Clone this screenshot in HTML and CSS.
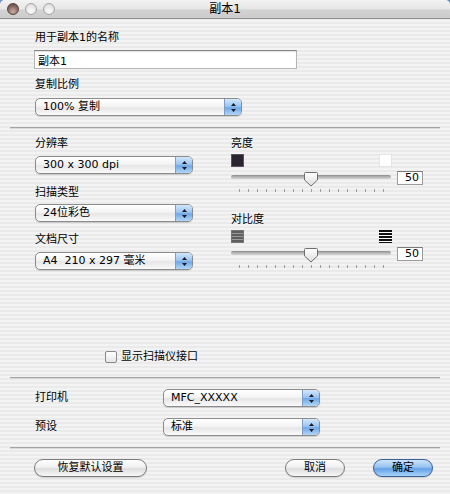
FILE: index.html
```html
<!DOCTYPE html>
<html lang="zh-CN">
<head>
    <meta charset="UTF-8">
    <meta name="viewport" content="width=device-width, initial-scale=1.0">
    <title>副本1</title>
    <link rel="stylesheet" href="styles.css">
</head>
<body>
    <div class="window">
        <div class="titlebar">
            <div class="lights">
                <span class="light light-close"></span>
                <span class="light"></span>
                <span class="light"></span>
            </div>
            <div class="title">副本1</div>
        </div>

        <div class="content">
            <!-- Copy name and ratio -->
            <div class="section name-section">
                <div class="label">用于副本1的名称</div>
                <input class="text-field" type="text" value="副本1">
                <div class="label label-ratio">复制比例</div>
                <div class="popup popup-ratio">
                    <span class="popup-text">100% 复制</span>
                    <span class="popup-arrows"><svg width="5" height="9" viewBox="0 0 5 9"><path d="M2.5 0L5 3H0Z M0 6H5L2.5 9Z" fill="#1c1c28"/></svg></span>
                </div>
            </div>

            <hr class="sep sep-top">

            <!-- Scan settings -->
            <div class="section scan-section">
                <div class="col-left">
                    <div class="label">分辨率</div>
                    <div class="popup popup-col">
                        <span class="popup-text">300 x 300 dpi</span>
                        <span class="popup-arrows"><svg width="5" height="9" viewBox="0 0 5 9"><path d="M2.5 0L5 3H0Z M0 6H5L2.5 9Z" fill="#1c1c28"/></svg></span>
                    </div>
                    <div class="label label-type">扫描类型</div>
                    <div class="popup popup-col popup-type">
                        <span class="popup-text">24位彩色</span>
                        <span class="popup-arrows"><svg width="5" height="9" viewBox="0 0 5 9"><path d="M2.5 0L5 3H0Z M0 6H5L2.5 9Z" fill="#1c1c28"/></svg></span>
                    </div>
                    <div class="label label-size">文档尺寸</div>
                    <div class="popup popup-col">
                        <span class="popup-text">A4&nbsp;&nbsp;210 x 297 毫米</span>
                        <span class="popup-arrows"><svg width="5" height="9" viewBox="0 0 5 9"><path d="M2.5 0L5 3H0Z M0 6H5L2.5 9Z" fill="#1c1c28"/></svg></span>
                    </div>
                </div>

                <div class="col-right">
                    <div class="label">亮度</div>
                    <div class="icon-row">
                        <span class="swatch swatch-dark"></span>
                        <span class="swatch swatch-light"></span>
                    </div>
                    <div class="slider-row">
                        <div class="slider">
                            <div class="track"></div>
                            <svg class="thumb" width="16" height="16" viewBox="0 0 16 16">
                                <defs>
                                    <linearGradient id="thumb-fill" x1="0" y1="0" x2="0" y2="1">
                                        <stop offset="0" stop-color="#ffffff"/>
                                        <stop offset="1" stop-color="#dcdcdc"/>
                                    </linearGradient>
                                </defs>
                                <path d="M2.5 1.5H13.5Q14.5 1.5 14.5 2.5V9L8 15L1.5 9V2.5Q1.5 1.5 2.5 1.5Z" fill="url(#thumb-fill)" stroke="#6e6e6e"/>
                            </svg>
                        </div>
                        <div class="value-box">50</div>
                    </div>
                    <div class="ticks">
                        <i></i><i></i><i></i><i></i><i></i><i></i><i></i><i></i><i></i>
                        <i></i><i></i><i></i><i></i><i></i><i></i><i></i><i></i>
                    </div>

                    <div class="label label-contrast">对比度</div>
                    <div class="icon-row">
                        <span class="swatch stripes-low"></span>
                        <span class="swatch stripes-high"></span>
                    </div>
                    <div class="slider-row">
                        <div class="slider">
                            <div class="track"></div>
                            <svg class="thumb" width="16" height="16" viewBox="0 0 16 16">
                                <path d="M2.5 1.5H13.5Q14.5 1.5 14.5 2.5V9L8 15L1.5 9V2.5Q1.5 1.5 2.5 1.5Z" fill="url(#thumb-fill)" stroke="#6e6e6e"/>
                            </svg>
                        </div>
                        <div class="value-box">50</div>
                    </div>
                    <div class="ticks">
                        <i></i><i></i><i></i><i></i><i></i><i></i><i></i><i></i><i></i>
                        <i></i><i></i><i></i><i></i><i></i><i></i><i></i><i></i>
                    </div>
                </div>
            </div>

            <label class="check-row">
                <span class="checkbox"></span>
                <span>显示扫描仪接口</span>
            </label>

            <hr class="sep sep-mid">

            <!-- Printer and preset -->
            <div class="section printer-section">
                <div class="label">打印机</div>
                <div class="popup popup-printer">
                    <span class="popup-text">MFC_XXXXX</span>
                    <span class="popup-arrows"><svg width="5" height="9" viewBox="0 0 5 9"><path d="M2.5 0L5 3H0Z M0 6H5L2.5 9Z" fill="#1c1c28"/></svg></span>
                </div>
                <div class="label">预设</div>
                <div class="popup popup-printer">
                    <span class="popup-text">标准</span>
                    <span class="popup-arrows"><svg width="5" height="9" viewBox="0 0 5 9"><path d="M2.5 0L5 3H0Z M0 6H5L2.5 9Z" fill="#1c1c28"/></svg></span>
                </div>
            </div>

            <hr class="sep sep-bottom">

            <div class="button-row">
                <button class="btn btn-reset">恢复默认设置</button>
                <button class="btn btn-cancel">取消</button>
                <button class="btn btn-ok">确定</button>
            </div>
        </div>
    </div>
</body>
</html>
```

FILE: styles.css
```css
html {
    background: #6f8fbf;
}

body {
    margin: 0;
    padding: 0;
    font-family: "DejaVu Sans", "Noto Sans CJK SC", sans-serif;
    font-size: 11px;
    color: #000;
}

.window {
    height: 494px;
    border-radius: 5px 5px 0 0;
    overflow: hidden;
    background: repeating-linear-gradient(#f3f3f3 0 2px, #eaeaea 2px 4px);
}

/* Title bar */
.titlebar {
    position: relative;
    height: 18px;
    border-bottom: 1px solid #8e8e8e;
    background: linear-gradient(#f2f2f2, #e6e6e6 50%, #d2d2d2 55%, #cdcdcd);
}

.lights {
    display: flex;
    gap: 6px;
    padding: 3px 0 0 7px;
}

.light {
    width: 12px;
    height: 12px;
    box-sizing: border-box;
    border-radius: 50%;
    border: 1px solid #a4a4a4;
    background: radial-gradient(circle at 50% 70%, #fbfbfb, #d6d6d6);
}

.light-close {
    border-color: #5a4440;
    background: radial-gradient(circle at 50% 75%, #c9aea4, #8a6c66 55%, #4e3a38);
}

.title {
    position: absolute;
    top: 2px;
    left: 0;
    right: 0;
    text-align: center;
    font-size: 12px;
    line-height: 14px;
}

.content {
    padding: 0 10px;
}

.section {
    padding-left: 25px;
}

.label {
    line-height: 14px;
    white-space: nowrap;
}

/* Inputs */
.name-section {
    padding-top: 12px;
}

.text-field {
    display: block;
    box-sizing: border-box;
    width: 263px;
    height: 19px;
    margin: 5px 0 0 -1px;
    padding: 0 3px;
    border: 1px solid #b4b4b4;
    border-top-color: #858585;
    background: #fff;
    box-shadow: inset 0 1px 1px rgba(0, 0, 0, 0.12);
    font: inherit;
    color: #000;
}

.label-ratio {
    margin-top: 9px;
}

.popup {
    display: flex;
    box-sizing: border-box;
    height: 18px;
    margin-top: 6px;
    border: 1px solid #8c8c8c;
    border-radius: 5px;
    background: linear-gradient(#ffffff, #f4f4f4 45%, #e6e6e6 55%, #fafafa);
    box-shadow: 0 1px 1px rgba(0, 0, 0, 0.15);
}

.popup-text {
    flex: 1;
    padding-left: 7px;
    line-height: 16px;
    white-space: nowrap;
}

.popup-arrows {
    display: flex;
    align-items: center;
    justify-content: center;
    width: 16px;
    border-left: 1px solid #7f9cc6;
    border-radius: 0 4px 4px 0;
    background: linear-gradient(#d3e7fb, #9bc5f0 45%, #6fa8e6 55%, #b2d6f8);
}

.popup-ratio {
    width: 207px;
}

.popup-col {
    width: 158px;
    margin-top: 5px;
}

.popup-type {
    margin-top: 4px;
}

.popup-printer {
    width: 157px;
    margin-top: 0;
}

/* Separators */
.sep {
    height: 0;
    margin: 0;
    border: 0;
    border-top: 1px solid #a3a3a3;
    border-bottom: 1px solid #d9d9d9;
}

.sep-top {
    margin-top: 11px;
}

.sep-mid {
    margin-top: 13px;
}

.sep-bottom {
    margin-top: 11px;
}

/* Scan settings */
.scan-section {
    display: flex;
    gap: 38px;
    padding-top: 8px;
}

.col-left {
    width: 158px;
}

.label-type {
    margin-top: 12px;
}

.label-size {
    margin-top: 11px;
}

.col-right {
    width: 192px;
}

.icon-row {
    display: flex;
    justify-content: space-between;
    width: 161px;
    margin-top: 3px;
}

.swatch {
    width: 13px;
    height: 13px;
    box-sizing: border-box;
}

.swatch-dark {
    background: #2b2330;
    border: 1px solid #5a5460;
}

.swatch-light {
    background: #fff;
    border: 1px solid #e4e4e4;
}

.stripes-low {
    background: repeating-linear-gradient(#5e5e5e 0 2px, #9a9a9a 2px 3px);
    border: 1px solid #777;
}

.stripes-high {
    background: repeating-linear-gradient(#111 0 2px, #fff 2px 3px);
}

.slider-row {
    display: flex;
    gap: 6px;
    margin-top: 4px;
}

.slider {
    position: relative;
    width: 160px;
    height: 16px;
}

.track {
    position: absolute;
    top: 4px;
    left: 0;
    right: 0;
    height: 4px;
    border-radius: 2px;
    background: linear-gradient(#8a8a8a, #b8b8b8 50%, #d4d4d4);
}

.thumb {
    position: absolute;
    top: 0;
    left: 72px;
}

.value-box {
    box-sizing: border-box;
    width: 26px;
    height: 14px;
    padding-right: 3px;
    border: 1px solid #9a9a9a;
    border-top-color: #7a7a7a;
    background: #fff;
    text-align: right;
    line-height: 12px;
}

.ticks {
    display: flex;
    justify-content: space-between;
    width: 145px;
    height: 3px;
    margin: 2px 0 0 8px;
}

.ticks i {
    width: 1px;
    background: #9c9c9c;
}

.label-contrast {
    margin-top: 21px;
}

.col-right .slider-row:last-of-type {
    margin-top: 3px;
}

/* Checkbox */
.check-row {
    display: flex;
    align-items: center;
    gap: 4px;
    margin-top: 80px;
    padding-left: 95px;
    line-height: 14px;
}

.checkbox {
    width: 12px;
    height: 12px;
    box-sizing: border-box;
    border: 1px solid #8a8a8a;
    border-radius: 2px;
    background: linear-gradient(#ffffff, #e6e6e6);
}

/* Printer */
.printer-section {
    display: grid;
    grid-template-columns: 128px 157px;
    row-gap: 11px;
    align-items: center;
    padding-top: 10px;
}

/* Buttons */
.button-row {
    display: flex;
    padding: 10px 7px 0 24px;
}

.btn {
    box-sizing: border-box;
    height: 18px;
    padding: 0;
    border: 1px solid #7c7c7c;
    border-radius: 9px;
    background: linear-gradient(#fefefe, #f0f0f0 45%, #dedede 55%, #f7f7f7);
    box-shadow: 0 1px 1px rgba(0, 0, 0, 0.15);
    font: inherit;
    line-height: 16px;
    color: #000;
    cursor: pointer;
}

.btn-reset {
    width: 113px;
}

.btn-cancel {
    width: 60px;
    margin-left: auto;
}

.btn-ok {
    width: 60px;
    margin-left: 28px;
    border-color: #3d5f98;
    background: linear-gradient(#cde4fb, #95c2f0 45%, #63a1e6 55%, #a9d4fa);
}
```
